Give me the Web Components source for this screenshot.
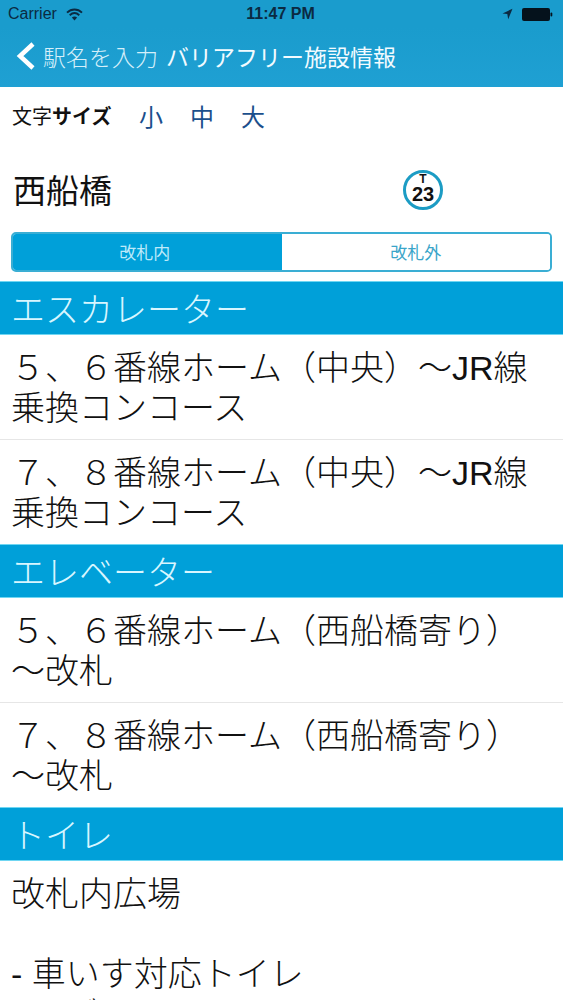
<!DOCTYPE html>
<html lang="ja">
<head>
<meta charset="utf-8">
<title>バリアフリー施設情報</title>
<style>
    html, body { margin: 0; padding: 0; height: 1000px; overflow: hidden; background: #fff; }
    body { font-family: "Liberation Sans", "Noto Sans CJK JP", sans-serif; color: #111; }
</style>
</head>
<body>
<status-bar carrier="Carrier" time="11:47 PM"></status-bar>
<nav-bar back="駅名を入力">バリアフリー施設情報</nav-bar>
<size-picker></size-picker>
<station-title code="23" line="T">西船橋</station-title>
<segment-control left="改札内" right="改札外"></segment-control>

<section-head>エスカレーター</section-head>
<facility-row>５、６番線ホーム（中央）～JR線乗換コンコース</facility-row>
<facility-row last>７、８番線ホーム（中央）～JR線乗換コンコース</facility-row>

<section-head>エレベーター</section-head>
<facility-row>５、６番線ホーム（西船橋寄り）～改札</facility-row>
<facility-row last>７、８番線ホーム（西船橋寄り）～改札</facility-row>

<section-head>トイレ</section-head>
<facility-row last>改札内広場<br><br>- 車いす対応トイレ<br>- ベビーシート</facility-row>

<script>
class StatusBar extends HTMLElement {
    connectedCallback() {
        this.attachShadow({ mode: 'open' });
        this.shadowRoot.innerHTML = `
            <style>
                :host {
                    display: grid;
                    grid-template-columns: 1fr auto 1fr;
                    align-items: center;
                    height: 28px;
                    padding: 0 10px 0 8px;
                    background: #1a9ccd;
                    color: #0b2a42;
                    font-size: 16px;
                }
                .left, .right { display: flex; align-items: center; }
                .left { gap: 9px; }
                .right { justify-content: flex-end; gap: 9px; }
                .time { font-weight: bold; color: #0b2a42; }
                svg { display: block; }
            </style>
            <div class="left">
                <span>${this.getAttribute('carrier')}</span>
                <svg width="17" height="13" viewBox="0 0 17 13">
                    <path d="M1 4.6C5.4.4 11.6.4 16 4.6" fill="none" stroke="#0b2a42" stroke-width="1.9"/>
                    <path d="M3.7 7.2c3-2.7 6.6-2.7 9.6 0" fill="none" stroke="#0b2a42" stroke-width="1.9"/>
                    <path d="M5.9 9.4c1.7-1.3 3.5-1.3 5.2 0L8.500 12.500z" fill="#0b2a42"/>
                </svg>
            </div>
            <span class="time">${this.getAttribute('time')}</span>
            <div class="right">
                <svg width="11" height="12" viewBox="0 0 11 12">
                    <path d="M10.500.8L.5 5.400l4.800.6.9 5.300z" fill="#0b2a42"/>
                </svg>
                <svg width="31" height="13" viewBox="0 0 31 13">
                    <rect x="0" y="0" width="28" height="13" rx="2" fill="#05121c"/>
                    <rect x="28.500" y="4.500" width="1.800" height="4" rx="1" fill="#05121c"/>
                </svg>
            </div>
        `;
    }
}

class NavBar extends HTMLElement {
    connectedCallback() {
        this.attachShadow({ mode: 'open' });
        this.shadowRoot.innerHTML = `
            <style>
                :host {
                    display: flex;
                    align-items: center;
                    height: 59px;
                    padding: 0 0 4px 16px;
                    box-sizing: border-box;
                    background: linear-gradient(#1a9ccd, #1fa0d3);
                    color: #fff;
                    font-size: 23px;
                    font-weight: 300;
                    white-space: nowrap;
                }
                svg { display: block; margin-right: 7px; }
                .back { color: #d5effa; margin-right: 8px; }
                .title { color: #f2fbff; font-weight: 400; }
            </style>
            <svg width="20" height="30" viewBox="0 0 20 30">
                <path d="M17 3L4 15l13 12" fill="none" stroke="#fff" stroke-width="4.500"/>
            </svg>
            <span class="back">${this.getAttribute('back')}</span>
            <span class="title"><slot></slot></span>
        `;
    }
}

class SizePicker extends HTMLElement {
    connectedCallback() {
        this.attachShadow({ mode: 'open' });
        this.shadowRoot.innerHTML = `
            <style>
                :host {
                    display: flex;
                    align-items: center;
                    height: 60px;
                    padding: 0 0 3px 12px;
                    box-sizing: border-box;
                    color: #111;
                }
                .label { font-size: 20px; width: 127px; white-space: nowrap; }
                .label b { font-weight: bold; }
                .sizes { display: flex; gap: 27px; font-size: 24px; color: #1b4f8c; }
            </style>
            <span class="label">文字<b>サイズ</b></span>
            <div class="sizes"><span>小</span><span>中</span><span>大</span></div>
        `;
    }
}

class StationTitle extends HTMLElement {
    connectedCallback() {
        this.attachShadow({ mode: 'open' });
        this.shadowRoot.innerHTML = `
            <style>
                :host {
                    display: grid;
                    grid-template-columns: 390px 40px;
                    align-items: center;
                    height: 85px;
                    padding: 0 0 0 13px;
                    box-sizing: border-box;
                    font-size: 33px;
                    color: #111;
                }
                .name { padding-bottom: 2px; }
                .badge {
                    width: 40px;
                    height: 40px;
                    box-sizing: border-box;
                    border: 3.500px solid #1c9cc4;
                    border-radius: 50%;
                    padding-bottom: 3px;
                    display: flex;
                    flex-direction: column;
                    align-items: center;
                    justify-content: center;
                    font-weight: bold;
                    color: #111;
                    font-family: "Liberation Sans", sans-serif;
                }
                .line { font-size: 12px; line-height: 13px; }
                .code { font-size: 20px; line-height: 17px; }
            </style>
            <span class="name"><slot></slot></span>
            <div class="badge">
                <span class="line">${this.getAttribute('line')}</span>
                <span class="code">${this.getAttribute('code')}</span>
            </div>
        `;
    }
}

class SegmentControl extends HTMLElement {
    connectedCallback() {
        this.attachShadow({ mode: 'open' });
        this.shadowRoot.innerHTML = `
            <style>
                :host {
                    display: grid;
                    grid-template-columns: 1fr 1fr;
                    height: 40px;
                    margin: 0 11px 9px;
                    box-sizing: border-box;
                    border: 2px solid #3aaed4;
                    border-radius: 5px;
                    overflow: hidden;
                    font-size: 17px;
                }
                span { display: flex; align-items: center; justify-content: center; padding-bottom: 2px; }
                .on { background: #00a0d9; color: #bdeafa; margin: -2px 0 -2px -2px; padding-right: 3px; }
                .off { background: #fff; color: #3aa5c9; }
            </style>
            <span class="on">${this.getAttribute('left')}</span>
            <span class="off">${this.getAttribute('right')}</span>
        `;
    }
}

class SectionHead extends HTMLElement {
    connectedCallback() {
        this.attachShadow({ mode: 'open' });
        this.shadowRoot.innerHTML = `
            <style>
                :host {
                    display: flex;
                    align-items: center;
                    height: 54px;
                    padding: 0 0 2px 11px;
                    box-sizing: border-box;
                    background: #00a0d9;
                    border-top: 1px solid #6fd6f2;
                    border-bottom: 1px solid #6fd6f2;
                    color: #d8f6ff;
                    font-size: 34px;
                    font-weight: 300;
                    white-space: nowrap;
                }
            </style>
            <slot></slot>
        `;
    }
}

class FacilityRow extends HTMLElement {
    connectedCallback() {
        this.attachShadow({ mode: 'open' });
        this.shadowRoot.innerHTML = `
            <style>
                :host {
                    display: block;
                    padding: 13px 30px 11px 11px;
                    font-size: 34px;
                    font-weight: 300;
                    line-height: 40px;
                    color: #111;
                    background: #fff;
                }
                :host(:not([last])) { border-bottom: 1px solid #e6e6e6; }
            </style>
            <slot></slot>
        `;
    }
}

customElements.define('status-bar', StatusBar);
customElements.define('nav-bar', NavBar);
customElements.define('size-picker', SizePicker);
customElements.define('station-title', StationTitle);
customElements.define('segment-control', SegmentControl);
customElements.define('section-head', SectionHead);
customElements.define('facility-row', FacilityRow);
</script>
</body>
</html>
